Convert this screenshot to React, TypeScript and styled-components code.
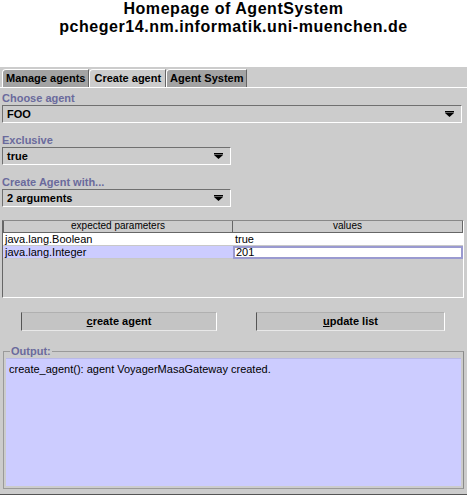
import React from "react";
import styled, { createGlobalStyle } from "styled-components";

const Global = createGlobalStyle`
  html, body { margin: 0; padding: 0; background: #ffffff; }
  body { font-family: "Liberation Sans", Arial, sans-serif; }
`;

const Page = styled.div`
  width: 467px;
  height: 495px;
  display: flex;
  flex-direction: column;
  overflow: hidden;
`;

const Header = styled.header`
  height: 67px;
  box-sizing: border-box;
  padding-top: 0;
  display: flex;
  flex-direction: column;
  align-items: center;
`;

const TitleLine = styled.div`
  font: bold 16px/18px "Liberation Sans", Arial, sans-serif;
  letter-spacing: 0.55px;
  color: #000;
  white-space: nowrap;
`;

const Applet = styled.div`
  flex: 1;
  background: #cccccc;
  display: flex;
  flex-direction: column;
  border-bottom: 1px solid #555;
  box-sizing: border-box;
`;

const TabBar = styled.div`
  display: flex;
  height: 19px;
  padding: 1px 0 0 2px;
  border-bottom: 1px solid #ffffff;
  box-sizing: content-box;
`;

const Tab = styled.div<{ $active?: boolean }>`
  height: 18px;
  margin-top: ${(p) => (p.$active ? "0" : "1px")};
  padding: 0 ${(p) => (p.$active ? "4px" : "3px")};
  background: ${(p) => (p.$active ? "#cccccc" : "#a3a3a3")};
  border-top: 1px solid #ffffff;
  border-left: 1px solid #ffffff;
  border-right: 1px solid #666666;
  border-top-left-radius: 4px;
  font: bold 11px/17px "Liberation Sans", Arial, sans-serif;
  color: #000;
  box-sizing: border-box;
  white-space: nowrap;
  position: relative;
  top: ${(p) => (p.$active ? "1px" : "0")};
  z-index: ${(p) => (p.$active ? 1 : 0)};
`;

const Body = styled.div`
  flex: 1;
  display: flex;
  flex-direction: column;
  padding: 4px 0 0 2px;
`;

const Field = styled.div<{ $width: number; $gap: number }>`
  width: ${(p) => p.$width}px;
  margin-top: ${(p) => p.$gap}px;
  display: flex;
  flex-direction: column;
`;

const Label = styled.div`
  height: 13px;
  font: bold 11px/13px "Liberation Sans", Arial, sans-serif;
  color: #6a6a9c;
`;

const Combo = styled.div`
  height: 18px;
  box-sizing: border-box;
  border-top: 1px solid #707070;
  border-left: 1px solid #707070;
  border-right: 1px solid #ffffff;
  border-bottom: 1px solid #ffffff;
  display: flex;
  align-items: center;
  justify-content: space-between;
  padding: 0 7px 0 4px;
  font: bold 11px/16px "Liberation Sans", Arial, sans-serif;
  color: #000;
`;

const Arrow = () => (
  <svg width="9" height="6" viewBox="0 0 9 6">
    <rect x="0" y="0" width="9" height="1.5" fill="#000" />
    <polygon points="0,2 9,2 4.5,6" fill="#000" />
  </svg>
);

const TablePane = styled.div`
  margin-top: 13px;
  width: 462px;
  height: 78px;
  box-sizing: border-box;
  border-top: 1px solid #888;
  border-left: 1px solid #666;
  border-right: 1px solid #ffffff;
  border-bottom: 1px solid #ffffff;
`;

const Table = styled.div`
  display: grid;
  grid-template-columns: 230px 230px;
`;

const HeadCell = styled.div`
  height: 11px;
  background: #cccccc;
  border: 1px solid #666;
  border-top: none;
  margin-left: -1px;
  font: 10px/10px "Liberation Sans", Arial, sans-serif;
  text-align: center;
  color: #000;
  &:first-child { margin-left: 0; }
`;

const Cell = styled.div<{ $bg: string; $edit?: boolean }>`
  height: 13px;
  box-sizing: border-box;
  background: ${(p) => p.$bg};
  border: ${(p) => (p.$edit ? "2px solid #9a9ad0" : "none")};
  border-bottom: ${(p) => (p.$edit ? "2px solid #9a9ad0" : "1px solid #c8c8c8")};
  padding-left: ${(p) => (p.$edit ? "1px" : "2px")};
  font: 11px/12px "Liberation Sans", Arial, sans-serif;
  line-height: ${(p) => (p.$edit ? "9px" : "12px")};
  color: #000;
  overflow: hidden;
`;

const ButtonRow = styled.div`
  display: flex;
  gap: 39px;
  margin-top: 14px;
  padding-left: 19px;
`;

const Button = styled.div<{ $width: number }>`
  width: ${(p) => p.$width}px;
  height: 19px;
  box-sizing: border-box;
  background: #c4c4c4;
  border-top: 1px solid #b0b0b0;
  border-left: 1px solid #555;
  border-right: 1px solid #ffffff;
  border-bottom: 1px solid #e8e8e8;
  text-align: center;
  font: bold 11px/17px "Liberation Sans", Arial, sans-serif;
  color: #000;
  u { text-decoration: underline; }
`;

const OutputGroup = styled.fieldset`
  margin: 15px 0 0 1px;
  padding: 0 2px 2px 2px;
  width: 461px;
  box-sizing: border-box;
  border: 1px solid #9a9a9a;
  border-right-color: #8a8a8a;
`;

const Legend = styled.legend`
  padding: 0 1px;
  margin-left: 4px;
  font: bold 11px/11px "Liberation Sans", Arial, sans-serif;
  color: #6a6a9c;
`;

const OutputArea = styled.div`
  height: 128px;
  box-sizing: border-box;
  margin-top: 1px;
  background: #ccccff;
  border-top: 1px solid #b8b8e8;
  padding: 4px 3px;
  font: 11px/13px "Liberation Sans", Arial, sans-serif;
  color: #000;
`;

export default function App() {
  return (
    <Page>
      <Global />
      <Header>
        <TitleLine>Homepage of AgentSystem</TitleLine>
        <TitleLine>pcheger14.nm.informatik.uni-muenchen.de</TitleLine>
      </Header>
      <Applet>
        <TabBar>
          <Tab>Manage agents</Tab>
          <Tab $active>Create agent</Tab>
          <Tab>Agent System</Tab>
        </TabBar>
        <Body>
          <Field $width={460} $gap={0}>
            <Label>Choose agent</Label>
            <Combo>
              FOO
              <Arrow />
            </Combo>
          </Field>
          <Field $width={229} $gap={11}>
            <Label>Exclusive</Label>
            <Combo>
              true
              <Arrow />
            </Combo>
          </Field>
          <Field $width={229} $gap={11}>
            <Label>Create Agent with...</Label>
            <Combo>
              2 arguments
              <Arrow />
            </Combo>
          </Field>
          <TablePane>
            <Table>
              <HeadCell>expected parameters</HeadCell>
              <HeadCell>values</HeadCell>
              <Cell $bg="#ffffff">java.lang.Boolean</Cell>
              <Cell $bg="#ffffff">true</Cell>
              <Cell $bg="#ccccff">java.lang.Integer</Cell>
              <Cell $bg="#ffffff" $edit>
                201
              </Cell>
            </Table>
          </TablePane>
          <ButtonRow>
            <Button $width={196}>
              <u>c</u>reate agent
            </Button>
            <Button $width={189}>
              <u>u</u>pdate list
            </Button>
          </ButtonRow>
          <OutputGroup>
            <Legend>Output:</Legend>
            <OutputArea>create_agent(): agent VoyagerMasaGateway created.</OutputArea>
          </OutputGroup>
        </Body>
      </Applet>
    </Page>
  );
}
